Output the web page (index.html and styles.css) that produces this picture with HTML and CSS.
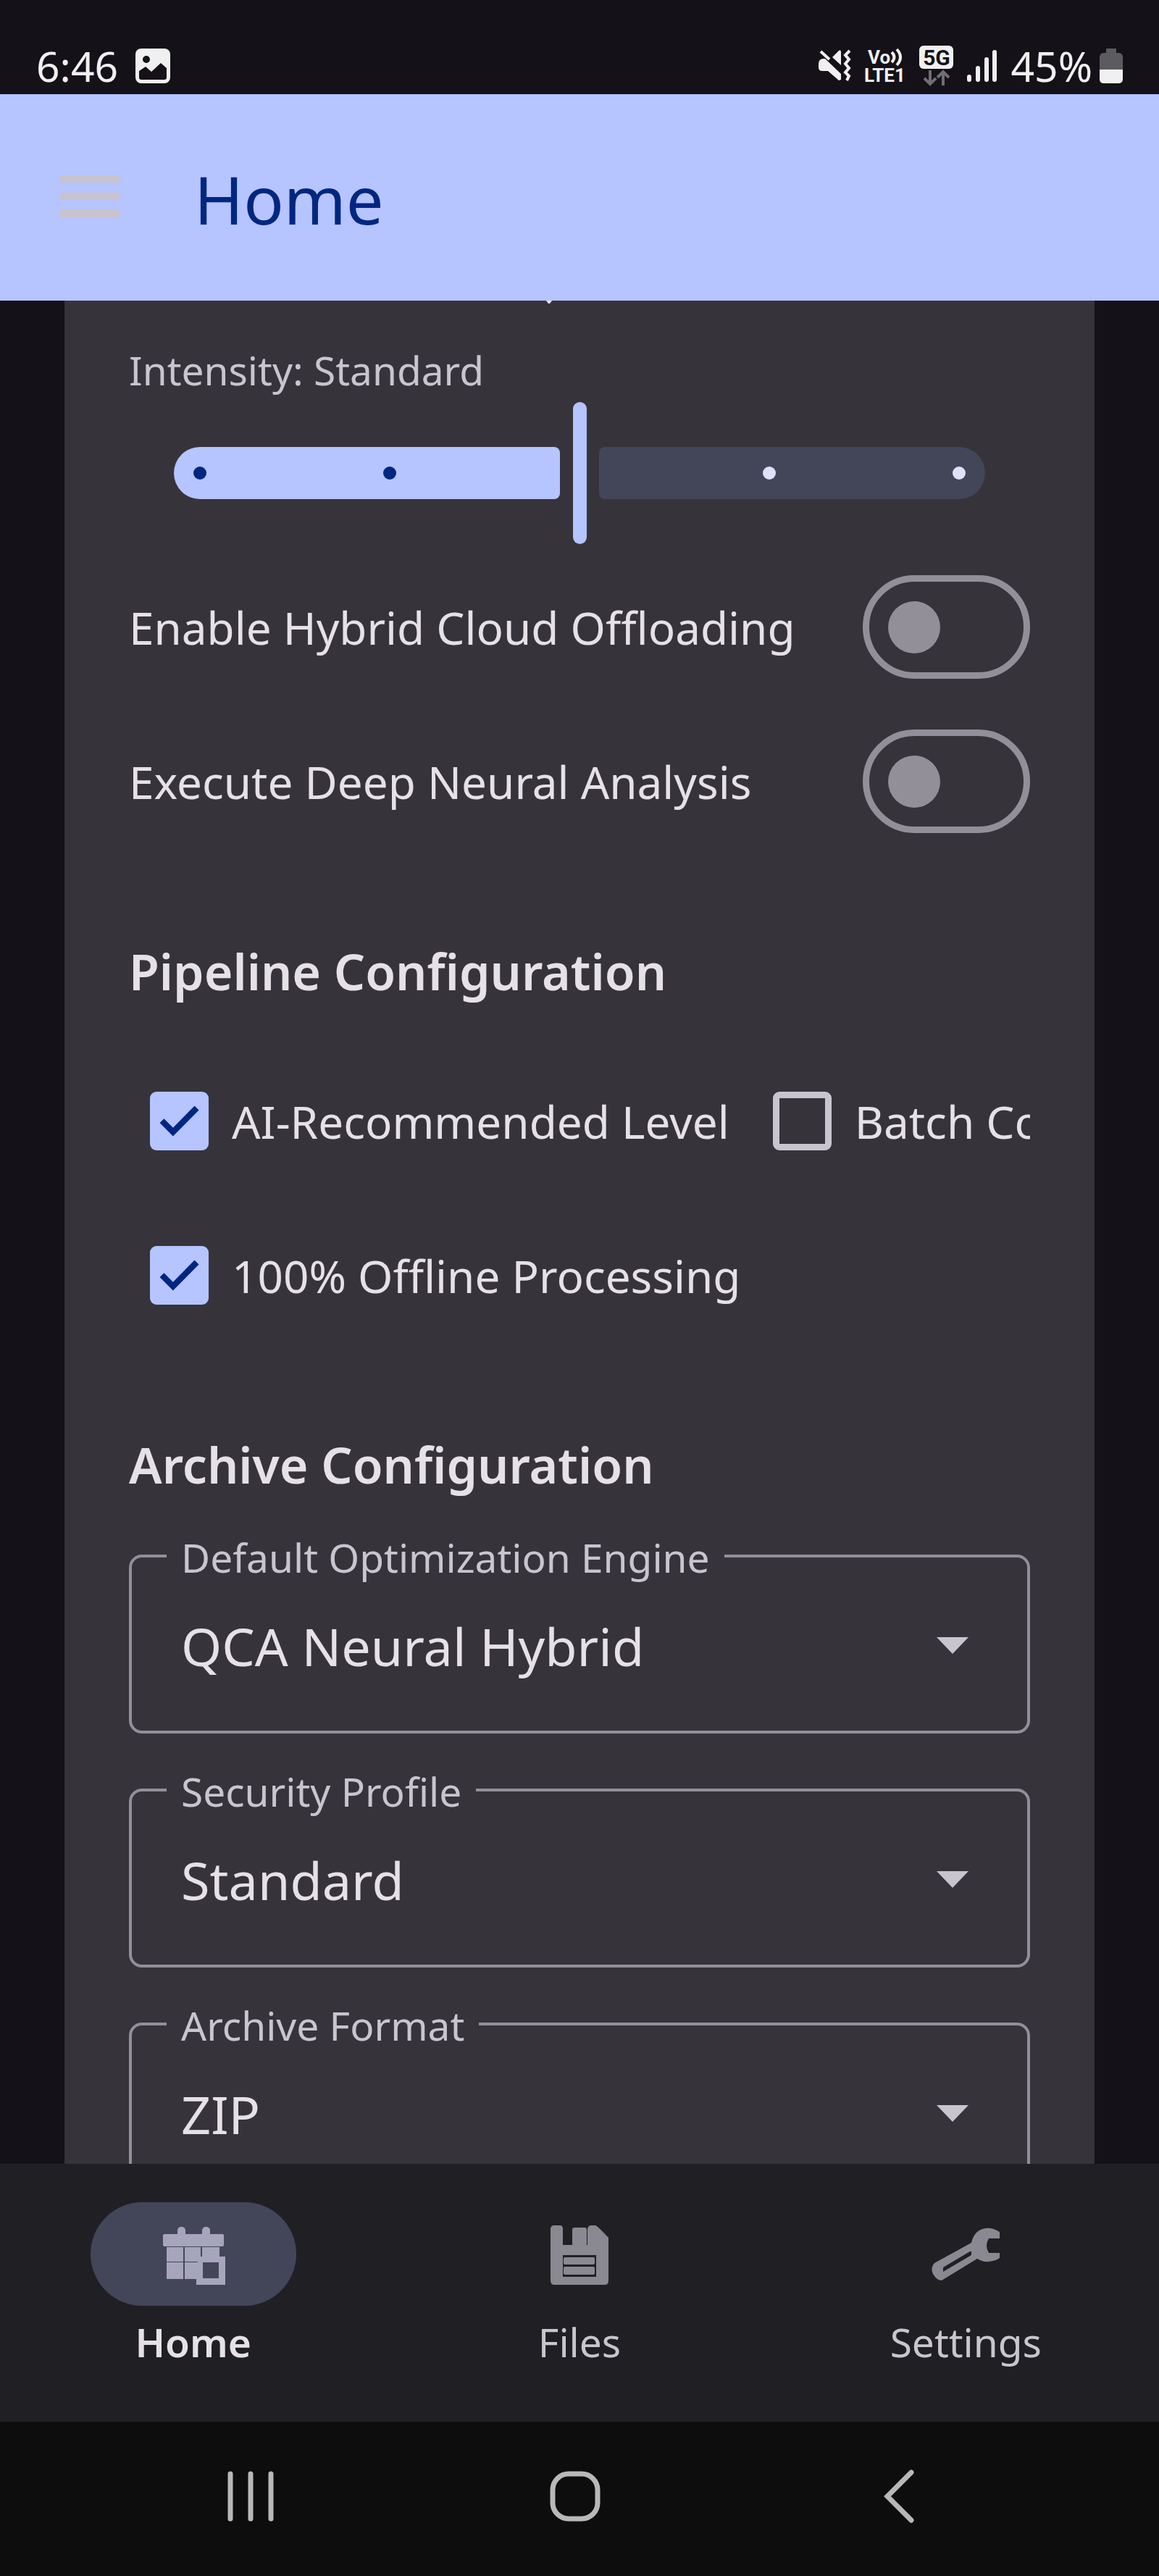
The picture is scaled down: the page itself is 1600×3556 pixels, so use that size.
FILE: index.html
```html
<!DOCTYPE html>
<html lang="en">
<head>
    <meta charset="UTF-8">
    <meta name="viewport" content="width=device-width, initial-scale=1.0">
    <title>Home</title>
    <link rel="stylesheet" href="styles.css">
</head>
<body>
    <div class="status-bar">
        <div class="status-left">
            <span>6:46</span>
            <svg width="48" height="48" viewBox="0 0 48 48">
                <rect width="48" height="48" rx="8" fill="#f0f0f0"/>
                <circle cx="15" cy="15" r="5" fill="#141218"/>
                <path d="M5 31 L14 25 L22 32 L35 20 L43 27 V40 Q43 43 40 43 H8 Q5 43 5 40Z" fill="#141218"/>
            </svg>
        </div>
        <div class="status-right">
            <svg width="46" height="46" viewBox="0 0 46 46">
                <path d="M1 20 Q1 14 7 13 L10 13 L32 34 V42 L29 43 L14 30 H6 Q1 30 1 25Z" fill="#f0f0f0"/>
                <path d="M20 11 L29 2 Q32 0 32 4 V22Z" fill="#f0f0f0"/>
                <path d="M4 3 L16 14" stroke="#f0f0f0" stroke-width="4"/>
                <path d="M44 2 L38 8 L43 14 L38 20 L43 26 L38 32 L43 37 L40 43" fill="none" stroke="#f0f0f0" stroke-width="4"/>
            </svg>
            <svg class="volte" width="58" height="50" viewBox="0 0 58 50">
                <text x="5" y="22">Vo</text>
                <path d="M38 6 Q45 13 38 20 M45 2 Q55 13 45 24" fill="none" stroke="#f0f0f0" stroke-width="4"/>
                <text x="0" y="47">LTE1</text>
            </svg>
            <svg class="net" width="48" height="56" viewBox="0 0 48 56">
                <rect width="47" height="32" rx="6" fill="#f0f0f0"/>
                <text x="24" y="27" text-anchor="middle">5G</text>
                <path d="M15 34 V53 M7 45 L15 53 L23 45 M33 55 V36 M25 44 L33 36 L41 44" fill="none" stroke="#6f6e73" stroke-width="4"/>
            </svg>
            <svg width="42" height="46" viewBox="0 0 42 46">
                <path d="M3 38 V42 M15 26 V42 M27 14 V42 M38 4 V42" stroke="#f0f0f0" stroke-width="6" stroke-linecap="round"/>
            </svg>
            <div class="battery">
                <span>45%</span>
                <svg width="32" height="48" viewBox="0 0 32 48">
                    <path d="M9 0 H23 V6 H27 Q32 7 32 12 V29 H0 V12 Q0 7 5 6 H9Z" fill="#5c5b60"/>
                    <path d="M0 29 H32 V42 Q32 48 26 48 H6 Q0 48 0 42Z" fill="#f0f0f0"/>
                </svg>
            </div>
        </div>
    </div>

    <header class="app-bar">
        <button class="menu-btn" type="button" aria-label="Open menu">
            <span></span>
            <span></span>
            <span></span>
        </button>
        <h1>Home</h1>
    </header>

    <main class="content">
        <div class="card">
            <!-- end of the line scrolled under the app bar -->
            <svg class="scrolled-line" width="16" height="4" viewBox="0 0 16 4">
                <path d="M4 0 H12 L9 4 H7Z" fill="#e6e1e6"/>
            </svg>

            <section class="controls">
                <div>
                    <label class="slider-label" for="intensity">Intensity: Standard</label>
                    <div class="slider">
                        <div class="track">
                            <div class="track-part active"><i></i><i></i></div>
                            <div class="track-part inactive"><i></i><i></i></div>
                        </div>
                        <input type="range" id="intensity" min="0" max="4" step="1" value="2">
                    </div>
                </div>
                <div class="switches">
                    <div class="switch-row">
                        <label for="hybrid-cloud">Enable Hybrid Cloud Offloading</label>
                        <input class="switch" type="checkbox" role="switch" id="hybrid-cloud">
                    </div>
                    <div class="switch-row">
                        <label for="deep-neural">Execute Deep Neural Analysis</label>
                        <input class="switch" type="checkbox" role="switch" id="deep-neural">
                    </div>
                </div>
            </section>

            <h2>Pipeline Configuration</h2>
            <section class="checks">
                <div class="check-row">
                    <input class="check" type="checkbox" id="ai-level" checked>
                    <label for="ai-level">AI-Recommended Level</label>
                    <input class="check" type="checkbox" id="batch">
                    <label for="batch">Batch Co</label>
                </div>
                <div class="check-row">
                    <input class="check" type="checkbox" id="offline" checked>
                    <label for="offline">100% Offline Processing</label>
                </div>
            </section>

            <h2>Archive Configuration</h2>
            <fieldset class="field">
                <legend><label for="engine">Default Optimization Engine</label></legend>
                <div class="select">
                    <select id="engine">
                        <option>QCA Neural Hybrid</option>
                    </select>
                    <svg width="44" height="24" viewBox="0 0 44 24"><path d="M0 0 H44 L22 23Z"/></svg>
                </div>
            </fieldset>
            <fieldset class="field">
                <legend><label for="security">Security Profile</label></legend>
                <div class="select">
                    <select id="security">
                        <option>Standard</option>
                    </select>
                    <svg width="44" height="24" viewBox="0 0 44 24"><path d="M0 0 H44 L22 23Z"/></svg>
                </div>
            </fieldset>
            <fieldset class="field">
                <legend><label for="format">Archive Format</label></legend>
                <div class="select">
                    <select id="format">
                        <option>ZIP</option>
                    </select>
                    <svg width="44" height="24" viewBox="0 0 44 24"><path d="M0 0 H44 L22 23Z"/></svg>
                </div>
            </fieldset>
        </div>
    </main>

    <nav class="bottom-nav">
        <a href="#home" class="nav-item selected">
            <span class="nav-icon">
                <svg width="96" height="96" viewBox="0 0 96 96" fill="#a6a5bd">
                    <rect x="26" y="10" width="11" height="20" rx="5"/>
                    <rect x="60" y="10" width="11" height="20" rx="5"/>
                    <rect x="6" y="20" width="84" height="17" rx="2"/>
                    <path d="M11 38 H34 V58 H11Z M36 38 H58 V58 H36Z M60 38 H84 V52 H60Z M11 59 H34 V82 H11Z M36 59 H58 V82 H36Z"/>
                    <path fill-rule="evenodd" d="M58 51 H92 V90 H52 V82 H54 V57 H58Z M61 59 V81 H83 V59Z"/>
                </svg>
            </span>
            <span>Home</span>
        </a>
        <a href="#files" class="nav-item">
            <span class="nav-icon">
                <svg width="96" height="96" viewBox="0 0 96 96" fill="#8a8891">
                    <path fill-rule="evenodd" d="M12 8 H21 Q25 8 25 13 V35 H59 V13 Q60 8 64 8 H70 Q73 9 88 25 V84 Q88 90 83 90 H13 Q8 90 8 84 V13 Q8 9 12 8Z M25 49 V79 H71 V49Z"/>
                    <rect x="38" y="11" width="20" height="25" rx="3"/>
                    <rect x="26" y="52" width="43" height="10" rx="2"/>
                    <rect x="26" y="65" width="43" height="11" rx="2"/>
                </svg>
            </span>
            <span>Files</span>
        </a>
        <a href="#settings" class="nav-item">
            <span class="nav-icon">
                <svg width="96" height="96" viewBox="0 0 96 96" fill="#8a8891">
                    <path fill-rule="evenodd" d="M95 17 Q85 11 76 12 Q60 14 56 32 L5 60 Q-1 66 3 75 Q8 84 15 84 L64 54 Q72 59 80 58 Q90 57 95 53 V46 H80 Q74 36 80 26 H95Z M17 72 L56 49 V44 H54 L17 66Z"/>
                </svg>
            </span>
            <span>Settings</span>
        </a>
    </nav>

    <div class="system-nav">
        <button type="button" aria-label="Recent apps">
            <svg width="76" height="76" viewBox="0 0 76 76">
                <path d="M10 7 V69 M38 7 V69 M66 7 V69"/>
            </svg>
        </button>
        <button type="button" aria-label="Home screen">
            <svg width="76" height="76" viewBox="0 0 76 76">
                <rect x="7" y="7" width="62" height="62" rx="22"/>
            </svg>
        </button>
        <button type="button" aria-label="Back">
            <svg width="76" height="76" viewBox="0 0 76 76">
                <path d="M54 5 L21 38 L54 71"/>
            </svg>
        </button>
    </div>
</body>
</html>
```
FILE: styles.css
```css
* {
    margin: 0;
    padding: 0;
    box-sizing: border-box;
}

body {
    font-family: "Noto Sans", sans-serif;
    background: #141218;
    color: #e6e1e6;
    height: 100vh;
    display: flex;
    flex-direction: column;
    overflow: hidden;
}

button {
    background: none;
    border: none;
    cursor: pointer;
}

svg {
    display: block;
    overflow: visible;
}

/* Status bar */
.status-bar {
    height: 130px;
    padding: 52px 50px 0;
    display: flex;
    justify-content: space-between;
    font-size: 57px;
    line-height: 78px;
    color: #f0f0f0;
    flex-shrink: 0;
}

.status-left,
.status-right,
.battery {
    display: flex;
    align-items: center;
}

.status-left {
    gap: 24px;
}

.status-right {
    gap: 18px;
}

.battery {
    gap: 10px;
}

.volte text {
    font: bold 26px Roboto, sans-serif;
    fill: #f0f0f0;
}

.net text {
    font: bold 30px Roboto, sans-serif;
    fill: #141218;
}

/* App bar */
.app-bar {
    height: 285px;
    padding: 4px 83px 0;
    display: flex;
    align-items: center;
    gap: 102px;
    background: #b6c4ff;
    flex-shrink: 0;
}

.app-bar h1 {
    font-size: 92px;
    line-height: 128px;
    font-weight: 400;
    color: #002780;
}

.menu-btn {
    display: flex;
    flex-direction: column;
    gap: 14px;
    padding-bottom: 8px;
}

.menu-btn span {
    width: 83px;
    height: 10px;
    background: #c8c3cd;
}

/* Content */
.content {
    flex: 1;
    min-height: 0;
    overflow: hidden;
    padding: 0 89px;
}

.card {
    background: #36343a;
    padding: 0 89px 60px;
}

.scrolled-line {
    margin-left: 46%;
}

.controls {
    padding: 56px 0 36px;
}

.slider-label {
    display: block;
    font-size: 55px;
    line-height: 72px;
    color: #c8c5ce;
}

.slider {
    display: grid;
    align-items: center;
    margin: 8px 62px 43px;
}

.slider > * {
    grid-area: 1 / 1;
}

.track {
    display: grid;
    grid-template-columns: 1fr 1fr;
    gap: 54px;
}

.track-part {
    height: 72px;
    display: flex;
    align-items: center;
    justify-content: space-between;
}

.track-part i {
    width: 18px;
    height: 18px;
    border-radius: 50%;
}

.active {
    background: #b6c4ff;
    border-radius: 36px 8px 8px 36px;
    padding: 0 226px 0 27px;
}

.active i {
    background: #002780;
}

.inactive {
    background: #434659;
    border-radius: 8px 36px 36px 8px;
    padding: 0 27px 0 226px;
}

.inactive i {
    background: #dfe1f9;
}

input[type="range"] {
    appearance: none;
    width: 100%;
    height: 196px;
    padding: 0 27px;
    background: none;
}

input[type="range"]::-webkit-slider-thumb {
    appearance: none;
    width: 19px;
    height: 196px;
    border-radius: 10px;
    background: #b6c4ff;
}

.switches {
    display: grid;
    gap: 70px;
}

.switch-row {
    display: flex;
    align-items: center;
    justify-content: space-between;
    height: 143px;
    font-size: 62px;
}

.switch {
    appearance: none;
    width: 231px;
    height: 143px;
    border: 9px solid #938f99;
    border-radius: 72px;
    padding: 0 26px;
    display: flex;
    align-items: center;
}

.switch::before {
    content: "";
    width: 72px;
    height: 72px;
    border-radius: 50%;
    background: #938f99;
}

h2 {
    font-size: 68px;
    line-height: 96px;
    font-weight: 600;
    margin: 107px 0 40px;
}

.checks {
    padding-top: 12px;
}

.check-row {
    display: flex;
    align-items: center;
    height: 213px;
    padding-left: 29px;
    font-size: 62px;
    white-space: nowrap;
    overflow: hidden;
}

.check {
    appearance: none;
    flex-shrink: 0;
    width: 81px;
    height: 81px;
    border: 9px solid #c8c5ce;
    border-radius: 9px;
    margin-right: 32px;
}

.check:checked {
    border: none;
    background: #b6c4ff;
    display: grid;
    place-items: center;
}

.check:checked::before {
    content: "";
    width: 54px;
    height: 42px;
    background: #002780;
    clip-path: polygon(0 56%, 11% 42%, 34% 72%, 89% 0, 100% 14%, 34% 100%);
}

.check-row label + .check {
    margin-left: 60px;
}

/* Outlined select fields */
.field {
    border: 4px solid #938f99;
    border-radius: 18px;
    padding-left: 48px;
    margin-bottom: 40px;
}

.field legend {
    font-size: 55px;
    line-height: 72px;
    padding: 4px 20px 0;
    color: #c8c5ce;
}

.select {
    display: grid;
    align-items: center;
}

.select > * {
    grid-area: 1 / 1;
}

.select select {
    appearance: none;
    width: 100%;
    height: 203px;
    padding: 0 20px 32px;
    border: none;
    background: none;
    color: #e6e1e6;
    font: 72px "Noto Sans", sans-serif;
}

.select svg {
    justify-self: end;
    margin: 0 81px 32px 0;
    fill: #c8c5ce;
    pointer-events: none;
}

/* Bottom navigation */
.bottom-nav {
    display: grid;
    grid-template-columns: repeat(3, 1fr);
    height: 356px;
    padding-top: 53px;
    background: #201f24;
    flex-shrink: 0;
}

.nav-item {
    display: flex;
    flex-direction: column;
    align-items: center;
    gap: 14px;
    text-decoration: none;
    color: #c8c5ce;
    font-size: 55px;
    line-height: 72px;
}

.nav-icon {
    display: grid;
    place-items: center;
    width: 284px;
    height: 143px;
    border-radius: 72px;
}

.selected {
    color: #e6e1e6;
    font-weight: 600;
}

.selected .nav-icon {
    background: #434659;
}

/* System navigation */
.system-nav {
    display: flex;
    align-items: center;
    justify-content: space-between;
    height: 213px;
    padding: 0 320px 8px 308px;
    background: #0d0d0e;
    flex-shrink: 0;
}

.system-nav svg {
    fill: none;
    stroke: #b8b8b8;
    stroke-width: 7;
    stroke-linecap: round;
}
```
